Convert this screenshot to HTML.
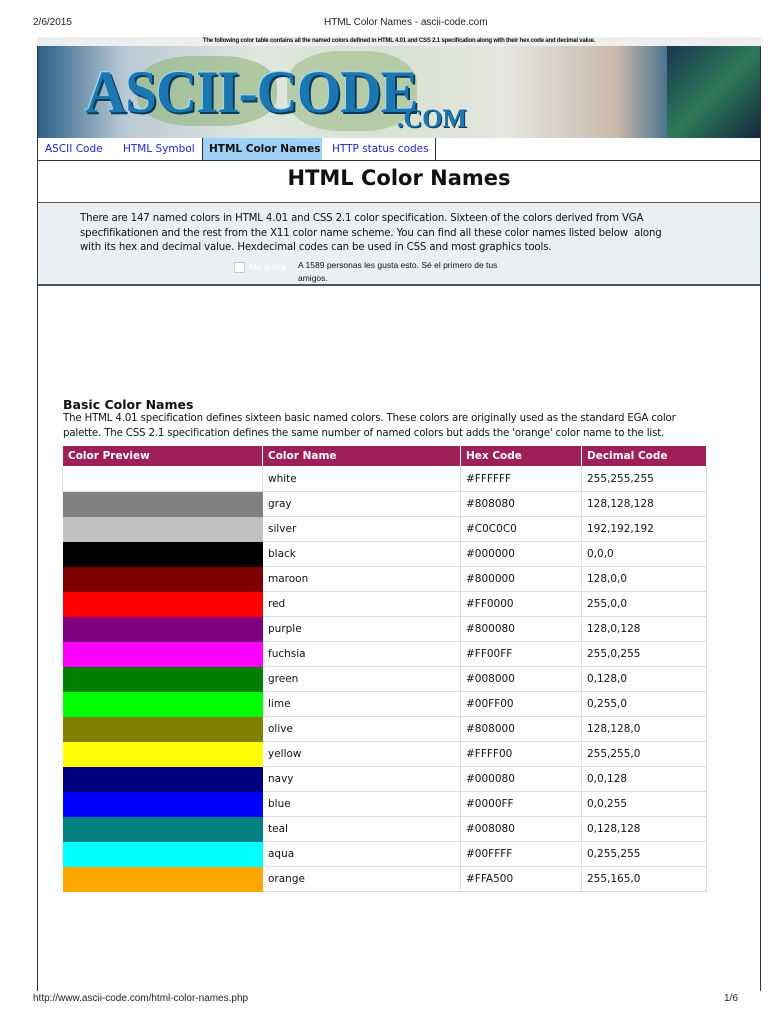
<!DOCTYPE html>
<html><head><meta charset="utf-8">
<style>
*{margin:0;padding:0;box-sizing:border-box}
body{width:768px;height:1024px;background:#fff;font-family:"DejaVu Sans","Liberation Sans",sans-serif;position:relative;overflow:hidden;color:#111}
.a{position:absolute}
.hdr{font-family:"Liberation Sans",sans-serif;font-size:10px;color:#222}
table{border-collapse:collapse;position:absolute;left:62px;top:445px;width:645px;font-size:10.5px}
td,th{border:1px solid #ddd;height:25px;padding-left:5px;text-align:left}
th{background:#9e1f5a;color:#fff;font-weight:bold;height:21px;border-color:#fff}
td.s{border-color:transparent}
.p{font-size:10.2px;line-height:14.5px;letter-spacing:-0.15px}
</style></head><body>
<div class="a hdr" style="left:33px;top:17px">2/6/2015</div>
<div class="a hdr" style="left:324px;top:17px">HTML Color Names - ascii-code.com</div>
<div class="a" style="left:37px;top:37px;width:724px;height:9px;background:#eee;font:bold 6px 'Liberation Sans',sans-serif;text-align:center;line-height:9px;letter-spacing:-0.2px">The following color table contains all the named colors defined in HTML 4.01 and CSS 2.1 specification along with their hex code and decimal value.</div>
<div class="a" style="left:37px;top:46px;width:724px;height:92px;background:linear-gradient(90deg,#2a5f8a 0%,#b9c9d4 12%,#dfe6df 30%,#d9e2d2 50%,#e6e6e0 65%,#c9b9aa 80%,#3a6a8a 88%,#1c3b5a 100%);overflow:hidden">
 <div class="a" style="left:100px;top:10px;width:140px;height:70px;background:#8fb47a;opacity:.6;border-radius:40%"></div>
 <div class="a" style="left:250px;top:5px;width:130px;height:80px;background:#8fb47a;opacity:.5;border-radius:40%"></div>
 <div class="a" style="left:630px;top:0;width:94px;height:92px;background:linear-gradient(135deg,#1a3550,#2f7a5a 50%,#13283f)"></div>
 <div class="a" style="left:48px;top:12px;font:bold 60px 'Liberation Serif',serif;color:#1c76b0;letter-spacing:-1px;text-shadow:2px 2px 0 #0a3a5a,-1px -1px 0 #9fd8f5;transform:scaleX(.95);transform-origin:left">ASCII-CODE</div>
 <div class="a" style="left:360px;top:58px;font:bold 26px 'Liberation Serif',serif;color:#1c76b0;text-shadow:1px 1px 0 #0a3a5a">.COM</div>
</div>
<div class="a" style="left:37px;top:138px;width:724px;height:22px;font-size:10.5px;line-height:22px;color:#2222cc">
 <span class="a" style="left:8px">ASCII Code</span>
 <span class="a" style="left:86px">HTML Symbol</span>
 <span class="a" style="left:165px;width:120px;height:22px;background:#9fd0f5;color:#111;font-weight:bold;padding-left:6px;border-left:1px solid #333">HTML Color Names</span>
 <span class="a" style="left:295px">HTTP status codes</span>
 <span class="a" style="left:398px;top:0;width:1px;height:22px;background:#333"></span>
</div>
<div class="a" style="left:37px;top:160px;width:724px;height:1px;background:#333"></div>
<div class="a" style="left:37px;top:166px;width:724px;text-align:center;font:bold 21px 'DejaVu Sans',sans-serif">HTML Color Names</div>
<div class="a" style="left:37px;top:202px;width:724px;height:84px;background:#e9eff3;border-top:1px solid #555;border-bottom:2px solid #555">
 <div class="a p" style="left:43px;top:9px;width:645px">There are 147 named colors in HTML 4.01 and CSS 2.1 color specification. Sixteen of the colors derived from VGA<br>specfifikationen and the rest from the X11 color name scheme. You can find all these color names listed below&nbsp; along<br>with its hex and decimal value. Hexdecimal codes can be used in CSS and most graphics tools.</div>
 <div class="a" style="left:197px;top:59px;width:11px;height:11px;background:#fff;border:1px solid #ccc"></div>
 <div class="a" style="left:212px;top:59px;font:9px 'Liberation Sans',sans-serif;color:#fff">Me gusta</div>
 <div class="a" style="left:261px;top:56px;width:230px;font:8.5px 'Liberation Sans',sans-serif;line-height:13px">A 1589 personas les gusta esto. Sé el primero de tus amigos.</div>
</div>
<div class="a" style="left:37px;top:46px;width:1px;height:945px;background:#333"></div>
<div class="a" style="left:760px;top:46px;width:1px;height:945px;background:#333"></div>
<div class="a" style="left:63px;top:397px;font:bold 12.5px 'DejaVu Sans',sans-serif">Basic Color Names</div>
<div class="a p" style="left:63px;top:412px;width:645px">The HTML 4.01 specification defines sixteen basic named colors. These colors are originally used as the standard EGA color palette. The CSS 2.1 specification defines the same number of named colors but adds the 'orange' color name to the list.</div>
<table>
<tr><th style="width:200px">Color Preview</th><th style="width:198px">Color Name</th><th style="width:121px">Hex Code</th><th>Decimal Code</th></tr>
<tr><td style="background:#FFFFFF"></td><td>white</td><td>#FFFFFF</td><td>255,255,255</td></tr>
<tr><td class="s" style="background:#808080"></td><td>gray</td><td>#808080</td><td>128,128,128</td></tr>
<tr><td class="s" style="background:#C0C0C0"></td><td>silver</td><td>#C0C0C0</td><td>192,192,192</td></tr>
<tr><td class="s" style="background:#000000"></td><td>black</td><td>#000000</td><td>0,0,0</td></tr>
<tr><td class="s" style="background:#800000"></td><td>maroon</td><td>#800000</td><td>128,0,0</td></tr>
<tr><td class="s" style="background:#FF0000"></td><td>red</td><td>#FF0000</td><td>255,0,0</td></tr>
<tr><td class="s" style="background:#800080"></td><td>purple</td><td>#800080</td><td>128,0,128</td></tr>
<tr><td class="s" style="background:#FF00FF"></td><td>fuchsia</td><td>#FF00FF</td><td>255,0,255</td></tr>
<tr><td class="s" style="background:#008000"></td><td>green</td><td>#008000</td><td>0,128,0</td></tr>
<tr><td class="s" style="background:#00FF00"></td><td>lime</td><td>#00FF00</td><td>0,255,0</td></tr>
<tr><td class="s" style="background:#808000"></td><td>olive</td><td>#808000</td><td>128,128,0</td></tr>
<tr><td class="s" style="background:#FFFF00"></td><td>yellow</td><td>#FFFF00</td><td>255,255,0</td></tr>
<tr><td class="s" style="background:#000080"></td><td>navy</td><td>#000080</td><td>0,0,128</td></tr>
<tr><td class="s" style="background:#0000FF"></td><td>blue</td><td>#0000FF</td><td>0,0,255</td></tr>
<tr><td class="s" style="background:#008080"></td><td>teal</td><td>#008080</td><td>0,128,128</td></tr>
<tr><td class="s" style="background:#00FFFF"></td><td>aqua</td><td>#00FFFF</td><td>0,255,255</td></tr>
<tr><td class="s" style="background:#FFA500"></td><td>orange</td><td>#FFA500</td><td>255,165,0</td></tr>
</table>
<div class="a hdr" style="left:33px;top:993px">http://www.ascii-code.com/html-color-names.php</div>
<div class="a hdr" style="left:724px;top:993px">1/6</div>
</body></html>
